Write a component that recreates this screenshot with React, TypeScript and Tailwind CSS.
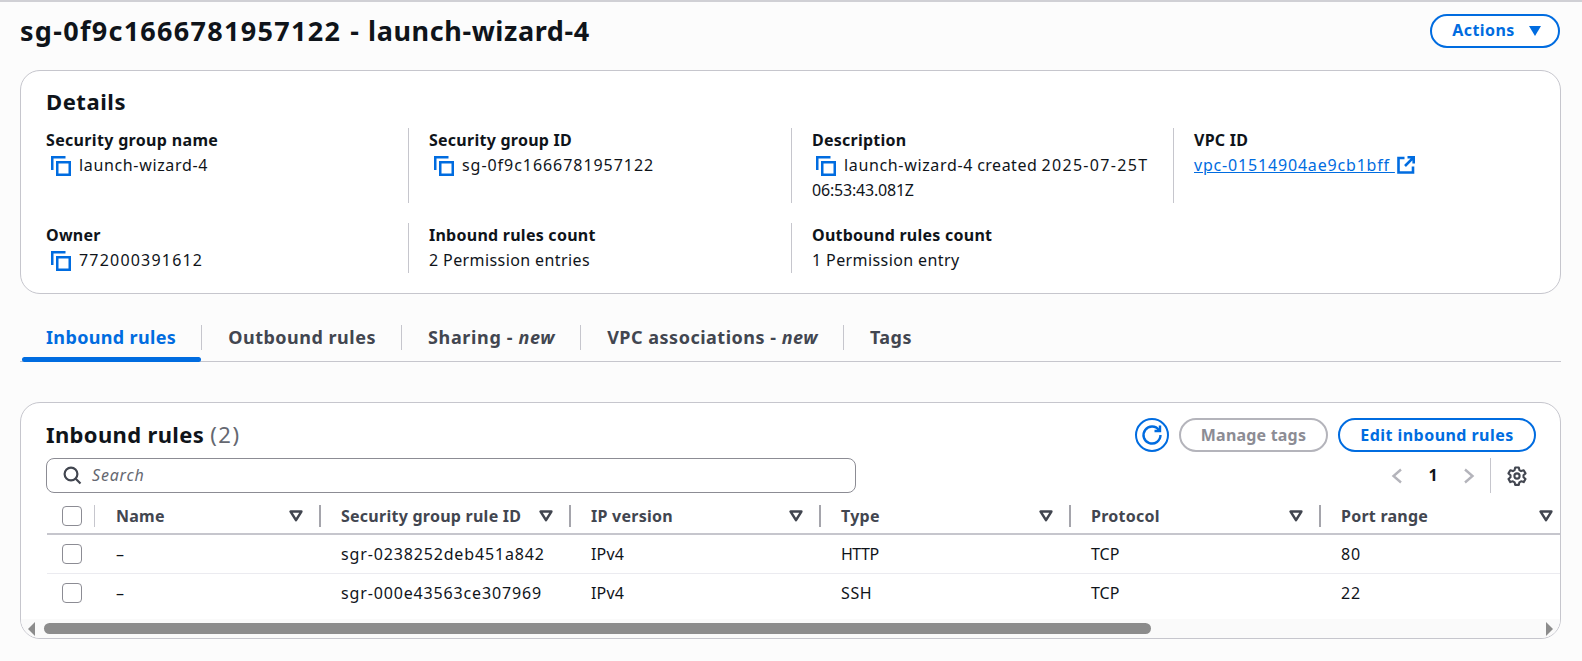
import React from "react";

const Copy = () => (
  <svg width="20" height="20" viewBox="0 0 20 20" fill="none" className="inline-block align-[-5px] shrink-0 text-[#006ce0]">
    <path d="M18.75 6.25H6.25V18.75H18.75Z" stroke="currentColor" strokeWidth="2.5" />
    <path d="M1.25 14V1.25H14.5" stroke="currentColor" strokeWidth="2.5" />
  </svg>
);

const External = () => (
  <svg width="18" height="18" viewBox="0 0 18 18" fill="none" className="inline-block align-[-3px] ml-[2px] text-[#006ce0]">
    <path d="M7.5 2H1.5V16.5H16V10.5" stroke="currentColor" strokeWidth="2.6" />
    <path d="M10.5 1.3H16.7V7.5M16.3 1.7L8 10" stroke="currentColor" strokeWidth="2.6" />
  </svg>
);

const Sort = () => (
  <svg width="14" height="12" viewBox="0 0 14 12" fill="none" className="shrink-0">
    <path d="M1.6 1.6H12.4L7 10.2Z" stroke="#424650" strokeWidth="2.5" strokeLinejoin="round" />
  </svg>
);

const Check = () => <div className="w-5 h-5 rounded-[4px] border border-[#8c8c94] bg-white shrink-0" />;

function Field({ label, children }: { label: string; children: React.ReactNode }) {
  return (
    <div className="pl-[20px] pr-3 border-l border-[#c6c6cd]">
      <div className="font-bold text-[#0f141a] tracking-[0.25px]">{label}</div>
      <div className="text-[#0f141a]">{children}</div>
    </div>
  );
}

const Tab = ({ children, active, last, track = "tracking-[0.5px]" }: { children: React.ReactNode; active?: boolean; last?: boolean; track?: string }) => (
  <div className={`h-[25px] flex items-center ${last ? "" : "border-r border-[#c6c6cd]"}`}>
    <span className={`text-[18px] font-bold leading-[25px] pl-[26px] pr-[25px] ${track} ${active ? "text-[#006ce0]" : "text-[#424650]"}`}>{children}</span>
  </div>
);

function Head({ label, w, pad = "pl-[20px]" }: { label: string; w: string; pad?: string }) {
  return (
    <div className={`${w} ${pad} shrink-0 h-[22px] flex items-center justify-between pr-[16px] border-r-2 border-[#a5a5ac] last:border-r-0 last:pr-[18px]`}>
      <span className="font-bold text-[#424650] tracking-[0.25px]">{label}</span>
      <Sort />
    </div>
  );
}

function Row({ id, ip, type, typeTrack, proto, port, last }: { id: string; ip: string; type: string; typeTrack: string; proto: string; port: string; last?: boolean }) {
  return (
    <div className={`flex items-center ${last ? "h-[38px]" : "h-[39px] border-b border-[#ebebf0]"}`}>
      <div className="w-[48px] shrink-0 pl-[15px]"><Check /></div>
      <div className="w-[226px] shrink-0 pl-[21px]">–</div>
      <div className="w-[250px] shrink-0 pl-[20px] tracking-[0.85px]">{id}</div>
      <div className="w-[250px] shrink-0 pl-[20px] tracking-[0.15px]">{ip}</div>
      <div className={`w-[250px] shrink-0 pl-[20px] ${typeTrack}`}>{type}</div>
      <div className="w-[250px] shrink-0 pl-[20px]">{proto}</div>
      <div className="w-[250px] shrink-0 pl-[20px] tracking-[0.8px]">{port}</div>
    </div>
  );
}

export default function App() {
  return (
    <div className="min-h-[661px] bg-[#fcfcfc] border-t-2 border-[#d0d0d5] pl-5 pr-[21px] text-[16px] leading-[25px] text-[#0f141a] font-['Noto_Sans',sans-serif] overflow-hidden">
      <div className="h-[68px] flex items-center justify-between pb-[10px]">
        <h1 className="text-[27px] font-bold leading-[36px] whitespace-nowrap">
          <span className="tracking-[1.3px]">sg-0f9c1666781957122</span> <span className="mx-[2px]">-</span> <span className="tracking-[0.6px]">launch-wizard-4</span>
        </h1>
        <button className="h-[34px] w-[130px] mr-[1px] pl-[3px] pb-[1px] rounded-[20px] border-2 border-[#006ce0] bg-white text-[#006ce0] font-bold flex items-center justify-center gap-[14px]">
          <span className="tracking-[0.4px]">Actions</span>
          <svg width="12" height="10" viewBox="0 0 12 10"><path d="M0 0H12L6 10Z" fill="#006ce0" /></svg>
        </button>
      </div>

      <section className="h-[224px] rounded-[20px] border border-[#c6c6cd] bg-white pt-[16px]">
        <h2 className="text-[22px] font-bold leading-[29px] pl-[25px] tracking-[0.55px]">Details</h2>
        <div className="grid grid-cols-[362px_383px_382px_1fr] ml-[25px] mt-[12px] h-[75px]">
          <div className="pr-4">
            <div className="font-bold tracking-[0.33px]">Security group name</div>
            <div className="flex items-center h-[25px] gap-[8px] pl-[5px] tracking-[0.65px]"><Copy />launch-wizard-4</div>
          </div>
          <Field label="Security group ID">
            <div className="flex items-center h-[25px] gap-[8px] pl-[5px] tracking-[0.95px]"><Copy />sg-0f9c1666781957122</div>
          </Field>
          <Field label="Description">
            <span className="pl-[4px] pr-[8px]"><Copy /></span>
            <span className="tracking-[0.65px]">launch-wizard-4</span> <span className="tracking-[0.5px]">created</span> <span className="tracking-[1.33px]">2025-07-25T</span>{" "}
            <span className="tracking-[-0.2px]">06:53:43.081Z</span>
          </Field>
          <Field label="VPC ID">
            <span className="text-[#006ce0] underline tracking-[0.82px]">vpc-01514904ae9cb1bff </span><External />
          </Field>
        </div>
        <div className="grid grid-cols-[362px_383px_382px_1fr] ml-[25px] mt-[20px] h-[50px]">
          <div>
            <div className="font-bold tracking-[0.25px]">Owner</div>
            <div className="flex items-center h-[25px] gap-[8px] pl-[5px] tracking-[1.2px]"><Copy />772000391612</div>
          </div>
          <Field label="Inbound rules count"><span className="tracking-[0.4px]">2 Permission entries</span></Field>
          <Field label="Outbound rules count"><span className="tracking-[0.4px]">1 Permission entry</span></Field>
        </div>
      </section>

      <div className="relative mt-[24px] h-[44px] border-b border-[#c6c6cd] flex items-start pt-[7px]">
        <Tab active track="tracking-[0.35px]">Inbound rules</Tab>
        <Tab>Outbound rules</Tab>
        <Tab track="tracking-[0.65px]">Sharing - <em>new</em></Tab>
        <Tab>VPC associations - <em>new</em></Tab>
        <Tab last>Tags</Tab>
        <div className="absolute left-[2px] bottom-[-1px] w-[179px] h-[5px] rounded-[3px] bg-[#006ce0]" />
      </div>

      <section className="mt-[40px] h-[237px] rounded-[20px] border border-[#c6c6cd] bg-white overflow-hidden relative">
        <div className="flex justify-between pl-[25px] pr-[24px] pt-[15px] h-[49px]">
          <h2 className="text-[22px] font-bold leading-[32px] tracking-[0.35px]">
            Inbound rules <span className="font-normal text-[#656871] tracking-[1.5px]">(2)</span>
          </h2>
          <div className="flex gap-[10px] h-[34px]">
            <button className="w-[34px] h-[34px] rounded-full border-2 border-[#006ce0] flex items-center justify-center">
              <svg width="22" height="22" viewBox="0 0 22 22" fill="none">
                <path d="M18 6.2A8.5 8.5 0 1 0 19.5 11" stroke="#006ce0" strokeWidth="2.4" />
                <path d="M19 1.5V7H13.5" stroke="#006ce0" strokeWidth="2.4" />
              </svg>
            </button>
            <button className="w-[149px] h-[34px] rounded-[20px] border-2 border-[#b4b4bb] text-[#8c8c94] font-bold tracking-[0.2px]">Manage tags</button>
            <button className="w-[198px] h-[34px] rounded-[20px] border-2 border-[#006ce0] text-[#006ce0] font-bold tracking-[0.45px]">Edit inbound rules</button>
          </div>
        </div>

        <div className="flex items-center pl-[25px] pr-[33px] h-[35px] mt-[6px]">
          <div className="w-[810px] h-[35px] rounded-[8px] border border-[#8c8c94] flex items-center pl-[16px] gap-[10px] bg-white">
            <svg width="19" height="19" viewBox="0 0 19 19" fill="none">
              <circle cx="8" cy="8" r="6.4" stroke="#424650" strokeWidth="2.2" />
              <path d="M12.5 12.5L17.5 17.5" stroke="#424650" strokeWidth="2.2" />
            </svg>
            <span className="italic text-[#656871] tracking-[0.8px]">Search</span>
          </div>
          <div className="ml-auto flex items-center h-[35px]">
            <svg width="12" height="16" viewBox="0 0 12 16" fill="none"><path d="M10 1.5L2.5 8L10 14.5" stroke="#b4b4bb" strokeWidth="2.4" /></svg>
            <span className="w-[60px] text-center font-bold">1</span>
            <svg width="12" height="16" viewBox="0 0 12 16" fill="none"><path d="M2 1.5L9.5 8L2 14.5" stroke="#b4b4bb" strokeWidth="2.4" /></svg>
            <div className="w-px h-[35px] bg-[#c6c6cd] ml-[15px] mr-[16px]" />
            <svg width="20" height="20" viewBox="0 0 20 20" fill="none">
              <path d="M8.2 1.5h3.6l.6 2.6 1.7 1 2.6-.8 1.8 3.1-2 1.8v2l2 1.8-1.8 3.1-2.6-.8-1.7 1-.6 2.6H8.2l-.6-2.6-1.7-1-2.6.8-1.8-3.1 2-1.8v-2l-2-1.8 1.8-3.1 2.6.8 1.7-1z" stroke="#424650" strokeWidth="2.1" strokeLinejoin="round" />
              <circle cx="10" cy="10" r="2.6" stroke="#424650" strokeWidth="2.1" />
            </svg>
          </div>
        </div>

        <div className="ml-[26px] w-[1560px] mt-[6px]">
          <div className="flex items-center h-[36px] border-b-2 border-[#c6c6cd]">
            <div className="w-[48px] h-[22px] shrink-0 pl-[15px] border-r border-[#c6c6cd] flex items-center"><Check /></div>
            <Head label="Name" w="w-[226px]" pad="pl-[21px]" />
            <Head label="Security group rule ID" w="w-[250px]" />
            <Head label="IP version" w="w-[250px]" />
            <Head label="Type" w="w-[250px]" />
            <Head label="Protocol" w="w-[250px]" />
            <Head label="Port range" w="w-[250px]" />
          </div>
          <Row id="sgr-0238252deb451a842" ip="IPv4" type="HTTP" typeTrack="tracking-[-0.5px]" proto="TCP" port="80" />
          <Row id="sgr-000e43563ce307969" ip="IPv4" type="SSH" typeTrack="tracking-[0.6px]" proto="TCP" port="22" last />
        </div>

        <div className="absolute left-0 right-0 bottom-0 h-[19px] bg-[#fafafa] flex items-center pl-[7px] pr-[6px]">
          <svg width="8" height="14" viewBox="0 0 8 14" className="shrink-0"><path d="M7 0V14L0 7Z" fill="#8c8c8c" /></svg>
          <div className="ml-[8px] w-[1107px] h-[11px] rounded-[6px] bg-[#8c8c8c]" />
          <svg width="8" height="14" viewBox="0 0 8 14" className="shrink-0 ml-auto"><path d="M0 0V14L7 7Z" fill="#8c8c8c" /></svg>
        </div>
      </section>
    </div>
  );
}
